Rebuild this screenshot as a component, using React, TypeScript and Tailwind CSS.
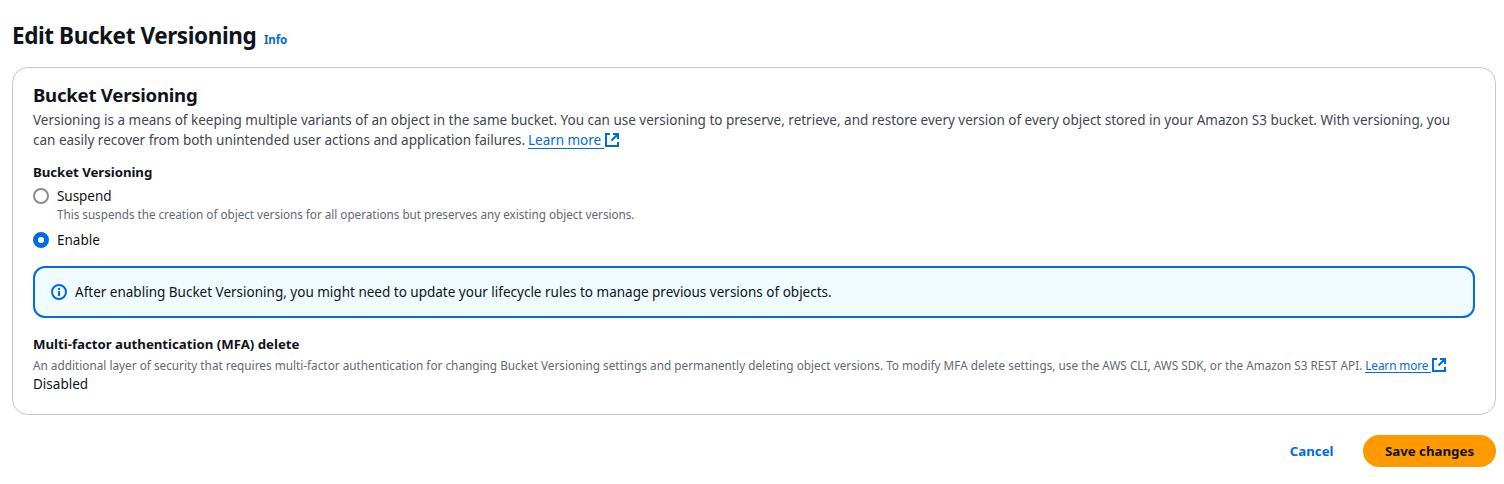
import React from "react";

function ExternalIcon({ className }: { className: string }) {
  return (
    <svg viewBox="0 0 16 16" className={className} fill="none" stroke="currentColor" strokeWidth="2">
      <path d="M9 2h5v5M7.5 8.5 14 2M14 10v4H2V2h4" />
    </svg>
  );
}

function InfoIcon() {
  return (
    <svg viewBox="0 0 16 16" className="h-4 w-4" fill="none" stroke="#006ce0" strokeWidth="2">
      <circle cx="8" cy="8" r="7" />
      <path d="M8 12V7M8 6V4" />
    </svg>
  );
}

export default function App() {
  return (
    <main className="h-[484px] bg-white pl-3 pr-2 pt-5 font-['Noto_Sans','Open_Sans',sans-serif] text-[13.5px] leading-5 text-[#0f141a] whitespace-nowrap">
      <header className="flex h-[47px] items-baseline">
        <h1 className="w-[252px] text-[22.5px] font-bold leading-[31px] tracking-[-0.41px]">Edit Bucket Versioning</h1>
        <a className="text-[11.5px] font-bold tracking-[-0.1px] text-[#006ce0]">Info</a>
      </header>
      <section className="h-[348px] rounded-2xl border border-[#c6c6cd] px-5 pt-[15px]">
        <h2 className="text-[18.6px] font-bold leading-6 tracking-[-0.25px]">Bucket Versioning</h2>
        <div className="mt-[3px] tracking-[-0.006px] text-[#424650]">
          <p>Versioning is a means of keeping multiple variants of an object in the same bucket. You can use versioning to preserve, retrieve, and restore every version of every object stored in your Amazon S3 bucket. With versioning, you</p>
          <p className="flex">
            <span>can easily recover from both unintended user actions and application failures.</span>
            <a className="ml-[3px] flex h-[19px] w-[75.5px] border-b border-[#006ce0] tracking-[-0.05px] text-[#006ce0]">Learn more</a>
            <ExternalIcon className="mt-0.5 h-4 w-4 text-[#006ce0]" />
          </p>
        </div>
        <h3 className="mt-3 text-[13.25px] font-bold tracking-[-0.06px]">Bucket Versioning</h3>
        <div className="mt-1 flex gap-2">
          <span className="mt-0.5 h-4 w-4 rounded-full border-2 border-[#8c8c94]" />
          <div>
            <p className="tracking-[-0.05px]">Suspend</p>
            <p className="text-[11.75px] leading-4 tracking-[-0.04px] text-[#656871]">This suspends the creation of object versions for all operations but preserves any existing object versions.</p>
          </div>
        </div>
        <div className="mt-2 flex gap-2">
          <span className="mt-0.5 h-4 w-4 rounded-full border-5 border-[#006ce0]" />
          <p>Enable</p>
        </div>
        <div className="mt-4 flex h-[52px] items-center gap-2 rounded-xl border-2 border-[#006ce0] bg-[#f0fbff] px-4">
          <InfoIcon />
          <p>After enabling Bucket Versioning, you might need to update your lifecycle rules to manage previous versions of objects.</p>
        </div>
        <h3 className="mt-4 text-[13.25px] font-bold tracking-[-0.02px]">Multi-factor authentication (MFA) delete</h3>
        <div className="mt-[3px] flex text-[11.75px] leading-4 text-[#656871]">
          <span className="tracking-[0.014px]">An additional layer of security that requires multi-factor authentication for changing Bucket Versioning settings and permanently deleting object versions. To modify MFA delete settings, use the AWS CLI, AWS SDK, or the Amazon S3 REST API.</span>
          <a className="ml-[3px] h-4 w-[66px] border-b border-[#006ce0] tracking-[-0.1px] text-[#006ce0]">Learn more</a>
          <ExternalIcon className="h-4 w-4 text-[#006ce0]" />
        </div>
        <p className="mt-px">Disabled</p>
      </section>
      <footer className="mt-5 flex items-center justify-end text-[13.25px]">
        <button className="mr-[29.5px] font-bold text-[#006ce0]">Cancel</button>
        <button className="h-8 w-[133px] rounded-full bg-[#ff9900] font-bold">Save changes</button>
      </footer>
    </main>
  );
}
